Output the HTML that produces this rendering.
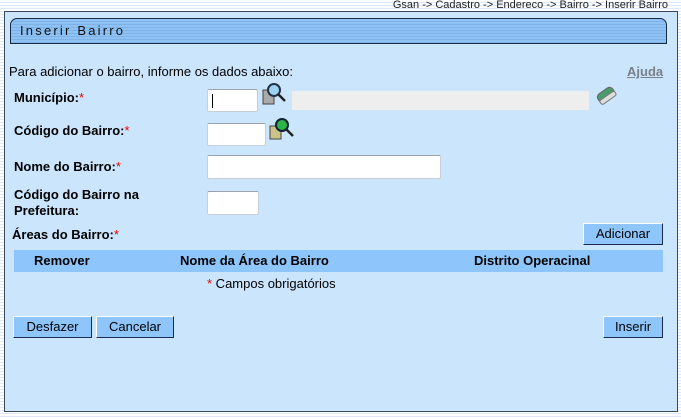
<!DOCTYPE html>
<html><head><meta charset="utf-8"><style>
*{margin:0;padding:0;box-sizing:border-box}
body{width:681px;height:419px;overflow:hidden;font-family:"Liberation Sans",Arial,sans-serif;font-size:13px;color:#000;
background:repeating-linear-gradient(to bottom,#fff 0,#fff 2px,#dbe9f8 2px,#dbe9f8 3px);position:relative}
.a{position:absolute;white-space:nowrap}
#panel{position:absolute;left:4px;top:11px;width:674px;height:401px;background:#cbe5fd;border:1px solid #3a4a5a}
#title{position:absolute;left:10px;top:18px;width:657px;height:26px;border:1px solid #1a2a40;border-radius:7px 7px 0 0;
background:repeating-linear-gradient(to bottom,#8ec2f4 0,#8ec2f4 2px,#7fb3e8 2px,#7fb3e8 3px)}
b{font-weight:bold}
.r{color:#e00}
.in{position:absolute;background:#fff;border:1px solid #c8cfd6;border-top-color:#9aa3ab;border-radius:2px}
.btn{position:absolute;height:22px;background:#8ec6fb;border:1px solid #1a2a50;border-top-color:#fff;border-left-color:#fff;font-size:13px;text-align:center;line-height:19px}
</style></head><body>
<div class="a" style="right:13px;top:-1px;font-size:11px;color:#222">Gsan -&gt; Cadastro -&gt; Endereco -&gt; Bairro -&gt; Inserir Bairro</div>
<div id="panel"></div>
<div id="title"></div>
<div class="a" style="left:20px;top:23px;font-size:13px;letter-spacing:2.2px;color:#111">Inserir Bairro</div>
<div class="a" style="left:9px;top:64px">Para adicionar o bairro, informe os dados abaixo:</div>
<div class="a" style="left:627px;top:64px;color:#7a8088;font-weight:bold;text-decoration:underline">Ajuda</div>

<div class="a" style="left:14px;top:90px"><b>Município:</b><span class="r">*</span></div>
<div class="in" style="left:207px;top:89px;width:51px;height:23px"><div style="position:absolute;left:4px;top:4px;width:1px;height:14px;background:#000"></div></div>
<svg class="a" style="left:262px;top:82px" width="28" height="25" viewBox="0 0 28 25"><rect x="1" y="8" width="11" height="14" fill="#aaa" stroke="#444"/><circle cx="12" cy="8" r="6" fill="#9cd3f5" stroke="#234" stroke-width="2"/><line x1="16" y1="12" x2="23" y2="19" stroke="#222" stroke-width="2.5"/></svg>
<div class="a" style="left:292px;top:91px;width:297px;height:19px;background:#eeeeee"></div>
<svg class="a" style="left:594px;top:83px" width="24" height="23" viewBox="0 0 24 23"><g transform="rotate(-35 12 12)"><rect x="3" y="7" width="18" height="10" rx="4" fill="#4a9a6a" stroke="#666"/><rect x="3" y="13" width="18" height="5" rx="2" fill="#ddd" stroke="#777"/></g></svg>

<div class="a" style="left:14px;top:123px"><b>Código do Bairro:</b><span class="r">*</span></div>
<div class="in" style="left:207px;top:123px;width:59px;height:23px"></div>
<svg class="a" style="left:269px;top:116px" width="28" height="25" viewBox="0 0 28 25"><rect x="1" y="10" width="11" height="13" fill="#cbc38a" stroke="#444"/><circle cx="13" cy="9" r="6" fill="#2cb34a" stroke="#123" stroke-width="2"/><line x1="17" y1="13" x2="24" y2="20" stroke="#222" stroke-width="2.5"/></svg>

<div class="a" style="left:14px;top:159px"><b>Nome do Bairro:</b><span class="r">*</span></div>
<div class="in" style="left:207px;top:155px;width:234px;height:24px"></div>

<div class="a" style="left:14px;top:187px;line-height:16px"><b>Código do Bairro na<br>Prefeitura:</b></div>
<div class="in" style="left:207px;top:191px;width:52px;height:24px"></div>

<div class="a" style="left:12px;top:227px"><b>Áreas do Bairro:</b><span class="r">*</span></div>
<div class="btn" style="left:583px;top:223px;width:80px">Adicionar</div>
<div class="a" style="left:14px;top:250px;width:649px;height:22px;background:#8ec6fb"></div>
<div class="a" style="left:34px;top:253px"><b>Remover</b></div>
<div class="a" style="left:180px;top:253px"><b>Nome da Área do Bairro</b></div>
<div class="a" style="left:474px;top:253px"><b>Distrito Operacinal</b></div>
<div class="a" style="left:207px;top:276px"><span class="r">*</span> Campos obrigatórios</div>

<div class="btn" style="left:13px;top:316px;width:79px">Desfazer</div>
<div class="btn" style="left:96px;top:316px;width:78px">Cancelar</div>
<div class="btn" style="left:603px;top:316px;width:60px">Inserir</div>
</body></html>
